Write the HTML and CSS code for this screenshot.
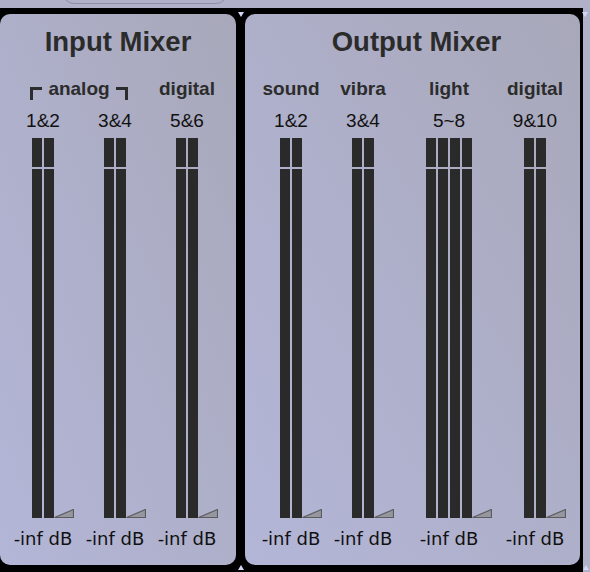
FILE: index.html
```html
<!DOCTYPE html>
<html lang="en">
<head>
    <meta charset="UTF-8">
    <meta name="viewport" content="width=device-width, initial-scale=1.0">
    <title>Mixers</title>
    <link rel="stylesheet" href="styles.css">
</head>
<body>
    <div class="topbar"><div class="arc"></div></div>

    <div class="frame">
        <span class="marker marker-down marker-mid-top"></span>
        <span class="marker marker-down marker-right-top"></span>
        <span class="marker marker-up marker-mid-bottom"></span>
        <span class="marker marker-up marker-right-bottom"></span>

        <section class="panel panel-input">
            <h1 class="title">Input Mixer</h1>
            <div class="channels channels-input">
                <div class="group group-analog">
                    <span class="bracket bracket-left"></span>analog<span class="bracket bracket-right"></span>
                </div>
                <div class="group">digital</div>

                <div class="num">1&amp;2</div>
                <div class="num">3&amp;4</div>
                <div class="num">5&amp;6</div>

                <div class="meter">
                    <div class="bar"><i></i><i></i></div>
                    <div class="bar"><i></i><i></i></div>
                    <svg class="gain" width="20" height="9"><polygon points="0.5,8.5 19.5,8.5 19.5,0.5"/></svg>
                </div>
                <div class="meter">
                    <div class="bar"><i></i><i></i></div>
                    <div class="bar"><i></i><i></i></div>
                    <svg class="gain" width="20" height="9"><polygon points="0.5,8.5 19.5,8.5 19.5,0.5"/></svg>
                </div>
                <div class="meter">
                    <div class="bar"><i></i><i></i></div>
                    <div class="bar"><i></i><i></i></div>
                    <svg class="gain" width="20" height="9"><polygon points="0.5,8.5 19.5,8.5 19.5,0.5"/></svg>
                </div>

                <div class="db">-inf dB</div>
                <div class="db">-inf dB</div>
                <div class="db">-inf dB</div>
            </div>
        </section>

        <section class="panel panel-output">
            <h1 class="title title-output">Output Mixer</h1>
            <div class="channels channels-output">
                <div class="group">sound</div>
                <div class="group">vibra</div>
                <div class="group">light</div>
                <div class="group">digital</div>

                <div class="num">1&amp;2</div>
                <div class="num">3&amp;4</div>
                <div class="num">5~8</div>
                <div class="num">9&amp;10</div>

                <div class="meter">
                    <div class="bar"><i></i><i></i></div>
                    <div class="bar"><i></i><i></i></div>
                    <svg class="gain" width="20" height="9"><polygon points="0.5,8.5 19.5,8.5 19.5,0.5"/></svg>
                </div>
                <div class="meter">
                    <div class="bar"><i></i><i></i></div>
                    <div class="bar"><i></i><i></i></div>
                    <svg class="gain" width="20" height="9"><polygon points="0.5,8.5 19.5,8.5 19.5,0.5"/></svg>
                </div>
                <div class="meter">
                    <div class="bar"><i></i><i></i></div>
                    <div class="bar"><i></i><i></i></div>
                    <div class="bar"><i></i><i></i></div>
                    <div class="bar"><i></i><i></i></div>
                    <svg class="gain" width="20" height="9"><polygon points="0.5,8.5 19.5,8.5 19.5,0.5"/></svg>
                </div>
                <div class="meter">
                    <div class="bar"><i></i><i></i></div>
                    <div class="bar"><i></i><i></i></div>
                    <svg class="gain" width="20" height="9"><polygon points="0.5,8.5 19.5,8.5 19.5,0.5"/></svg>
                </div>

                <div class="db">-inf dB</div>
                <div class="db">-inf dB</div>
                <div class="db">-inf dB</div>
                <div class="db">-inf dB</div>
            </div>
        </section>
    </div>
</body>
</html>
```

FILE: styles.css
```css
body {
    margin: 0;
    width: 590px;
    height: 572px;
    overflow: hidden;
    background: #b0b0c8;
    font-family: "Liberation Sans", Arial, sans-serif;
    color: #1e1e1e;
}
.topbar {
    height: 8px;
    overflow: hidden;
}
.arc {
    margin: -20px 0 0 62px;
    width: 164px;
    height: 22px;
    border: 1px solid #8e8ea6;
    border-radius: 12px;
}
.frame {
    position: relative;
    width: 583px;
    height: 564px;
    box-sizing: border-box;
    padding: 6px 3px 7px 0;
    display: flex;
    gap: 9px;
    background: #000;
}
.panel {
    border-radius: 10px;
    background: linear-gradient(to top right, #b4b6d8, #a8a8ba);
    padding-top: 12px;
    box-sizing: border-box;
}
.panel-input {
    width: 236px;
}
.panel-output {
    width: 335px;
}
.title {
    margin: 0;
    font-size: 27.5px;
    line-height: 32px;
    font-weight: bold;
    text-align: center;
    color: #2b2b2b;
}
.title-output {
    padding-left: 8px;
}
.channels {
    display: grid;
    margin-top: 20px;
    justify-items: center;
}
.channels-input {
    grid-template-columns: 72px 72px 72px;
    padding-left: 7px;
}
.channels-output {
    grid-template-columns: 72px 72px 100px 72px;
    padding-left: 10px;
}
.group {
    font-size: 19px;
    line-height: 22px;
    font-weight: bold;
    color: #2c2c2c;
}
.group-analog {
    grid-column: span 2;
    display: flex;
    gap: 6px;
}
.bracket {
    align-self: flex-end;
    width: 9px;
    height: 10px;
    border-top: 3px solid #2c2c2c;
}
.bracket-left {
    border-left: 3px solid #2c2c2c;
}
.bracket-right {
    border-right: 3px solid #2c2c2c;
}
.num {
    margin-top: 10px;
    font-size: 19px;
    line-height: 22px;
    color: #111;
}
.meter {
    position: relative;
    margin-top: 6px;
    height: 380px;
    display: flex;
    gap: 2px;
}
.bar {
    width: 10px;
    display: flex;
    flex-direction: column;
    gap: 2px;
}
.bar i {
    display: block;
    height: 29px;
    background: #2a2a2a;
}
.bar i + i {
    flex: 1;
}
.gain {
    position: absolute;
    left: 100%;
    bottom: 0;
    display: block;
}
.gain polygon {
    fill: #96969e;
    stroke: #5c5c60;
    stroke-width: 1.2;
}
.db {
    margin-top: 10px;
    font-family: "DejaVu Sans", sans-serif;
    font-size: 18px;
    line-height: 22px;
    color: #111;
}
.marker {
    position: absolute;
    width: 0;
    height: 0;
    border-left: 3px solid transparent;
    border-right: 3px solid transparent;
}
.marker-down {
    border-top: 5px solid #d3d8f2;
    top: 4px;
}
.marker-up {
    border-bottom: 5px solid #d3d8f2;
    bottom: 2px;
}
.marker-mid-top {
    left: 238px;
}
.marker-right-top {
    left: 582px;
}
.marker-mid-bottom {
    left: 238px;
}
.marker-right-bottom {
    left: 583px;
}
```
